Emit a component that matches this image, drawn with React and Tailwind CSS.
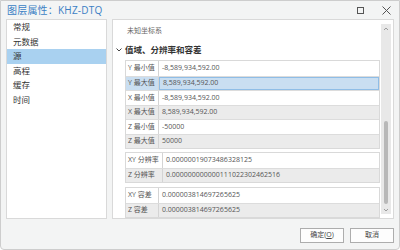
import React from 'react';

const FONT = { fontFamily: '"Segoe UI", "Open Sans", "Noto Sans CJK SC", sans-serif' };

const navItems = ['常规', '元数据', '源', '高程', '缓存', '时间'];

const extentRows = [
  ['Y 最小值', '-8,589,934,592.00'],
  ['Y 最大值', '8,589,934,592.00', true],
  ['X 最小值', '-8,589,934,592.00'],
  ['X 最大值', '8,589,934,592.00'],
  ['Z 最小值', '-50000'],
  ['Z 最大值', '50000'],
];

const resolutionRows = [
  ['XY 分辨率', '0.00000019073486328125'],
  ['Z 分辨率', '0.000000000000111022302462516'],
];

const toleranceRows = [
  ['XY 容差', '0.000003814697265625'],
  ['Z 容差', '0.000003814697265625'],
];

function PropTable({ rows, labelWidth }) {
  return (
    <div className="border border-[#d9d9d9] bg-white">
      {rows.map(([label, value, selected], i) => {
        const rowBg = selected ? 'bg-[#c9def1]' : i % 2 === 1 ? 'bg-[#ebebeb]' : 'bg-white';
        return (
          <div
            key={label}
            className={`flex h-[14.5px] text-[7px] text-[#555] ${rowBg} ${i > 0 ? 'border-t border-[#dcdcdc]' : ''}`}
          >
            <div
              className="flex items-center pl-[2px] border-r border-[#d4d4d4] shrink-0"
              style={{ width: labelWidth }}
            >
              {label}
            </div>
            <div
              className={`flex-1 flex items-center pl-[3px] ${selected ? 'border border-[#8fbde6]' : ''}`}
            >
              {value}
            </div>
          </div>
        );
      })}
    </div>
  );
}

export default function App() {
  return (
    <div
      className="w-[400px] h-[250px] bg-[#f3f4f4] border border-[#cdcdcd] rounded-b-[4px] flex flex-col overflow-hidden"
      style={FONT}
    >
      {/* Title bar */}
      <div className="h-[18px] flex items-center pl-[6px] pr-[6px]">
        <span className="text-[10px] text-[#3b7fc4] tracking-[0.2px]">图层属性：KHZ-DTQ</span>
        <div className="ml-auto flex items-center gap-[18px] pr-[2px]">
          <div className="w-[7px] h-[7px] border border-[#555]" />
          <svg width="9" height="9" viewBox="0 0 9 9" fill="none" stroke="#555" strokeWidth="1">
            <path d="M0.5 0.5 L8.5 8.5 M8.5 0.5 L0.5 8.5" />
          </svg>
        </div>
      </div>

      {/* Body */}
      <div className="flex gap-[5px] px-[5px] h-[200px]">
        {/* Left nav */}
        <div className="w-[101px] bg-white border border-[#d9d9d9] text-[8.5px] text-[#333]">
          {navItems.map((item) => (
            <div
              key={item}
              className={`h-[14.6px] flex items-center pl-[6px] ${item === '源' ? 'bg-[#a9d1f0]' : ''}`}
            >
              {item}
            </div>
          ))}
        </div>

        {/* Right panel */}
        <div className="flex-1 bg-white border border-[#d9d9d9] flex">
          <div className="flex-1 overflow-hidden pl-[12px] pr-[1px] pt-[5px]">
            <div className="h-[12px] flex items-center pl-[2px] text-[7px] text-[#666]">未知坐标系</div>
            <div className="h-[12px] mt-[7px] flex items-center -ml-[10px] text-[8.5px] font-bold text-[#333]">
              <svg width="8" height="8" viewBox="0 0 8 8" fill="none" stroke="#444" strokeWidth="1" className="mr-[2px]">
                <path d="M1.5 2.5 L4 5 L6.5 2.5" />
              </svg>
              值域、分辨率和容差
            </div>
            <div className="mt-[4px]">
              <PropTable rows={extentRows} labelWidth={33} />
            </div>
            <div className="mt-[3px]">
              <PropTable rows={resolutionRows} labelWidth={37} />
            </div>
            <div className="mt-[4px]">
              <PropTable rows={toleranceRows} labelWidth={33} />
            </div>
          </div>

          {/* Scrollbar */}
          <div className="w-[10px] my-[4px] mr-[2px] bg-[#e8e8e8] flex flex-col items-center">
            <svg width="6" height="6" viewBox="0 0 6 6" fill="none" stroke="#888" strokeWidth="0.8" className="mt-[2px]">
              <path d="M1 4 L3 2 L5 4" />
            </svg>
            <div className="flex-1" />
            <div className="w-[4px] h-[83px] bg-[#b8b8b8] rounded-[2px]" />
            <svg width="6" height="6" viewBox="0 0 6 6" fill="none" stroke="#888" strokeWidth="0.8" className="mt-[3px] mb-[1px]">
              <path d="M1 2 L3 4 L5 2" />
            </svg>
          </div>
        </div>
      </div>

      {/* Footer */}
      <div className="flex-1 flex justify-end items-start pt-[9px] pr-[5px] gap-[6px]">
        <button className="w-[44px] h-[15px] bg-[#fdfdfd] border border-[#adadad] text-[7px] text-[#444] flex items-center justify-center">
          确定(<span className="underline">O</span>)
        </button>
        <button className="w-[44px] h-[15px] bg-[#fdfdfd] border border-[#adadad] text-[7px] text-[#444] flex items-center justify-center">
          取消
        </button>
      </div>
    </div>
  );
}
